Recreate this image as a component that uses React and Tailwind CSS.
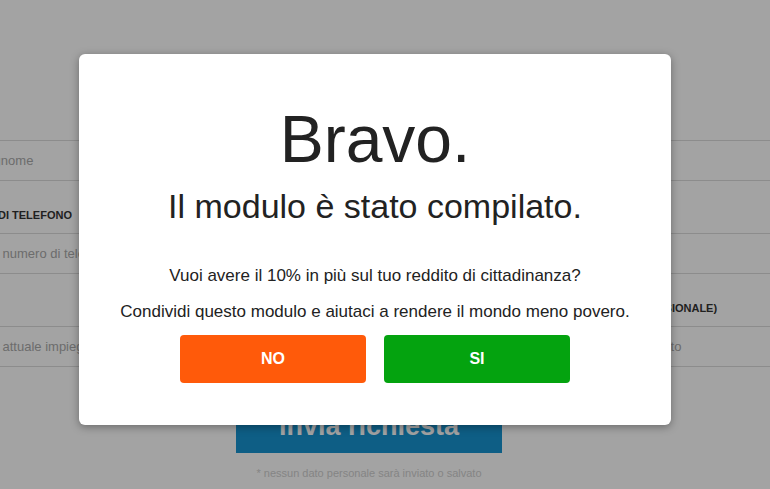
import React from 'react';

const Field = ({ label, placeholder }) => (
  <div>
    <div className="h-[52px] flex items-end pb-[10px] px-3 text-[11px] font-bold text-[#333] uppercase whitespace-nowrap">
      {label || '\u00a0'}
    </div>
    <div className="h-[41px] border border-[#dcdcdc] bg-white flex items-center px-3 text-[13px] text-[#aaaaaa] whitespace-nowrap overflow-hidden">
      {placeholder}
    </div>
  </div>
);

const App = () => {
  return (
    <div className="relative w-[770px] h-[489px] overflow-hidden bg-white font-['Liberation_Sans',Arial,sans-serif]">
      {/* Form behind the dialog */}
      <div className="pt-[88px]">
        <div className="-ml-9 grid grid-cols-[550px_256px] gap-x-5">
          <div>
            <Field label="" placeholder="Cognome" />
            <Field label="Nr. di telefono" placeholder="Tuo numero di telefono" />
            <Field label="" placeholder="Tuo attuale impiego" />
          </div>
          <div>
            <Field label="" placeholder="Nome" />
            <Field label="Email" placeholder="Indirizzo email" />
            <Field label="(Situazione professionale)" placeholder="Dipendente / Impiegato" />
          </div>
        </div>

        <button className="mt-[32px] ml-[236px] w-[266px] h-[54px] bg-[#1793d0] text-white text-[27px] font-bold">
          invia richiesta
        </button>
        <p className="mt-[12px] ml-[236px] w-[266px] text-center text-[11px] text-[#d0d0d0]">
          * nessun dato personale sarà inviato o salvato
        </p>
      </div>

      {/* Overlay + dialog */}
      <div className="absolute inset-0 bg-black/[0.36] pt-[54px] pl-[79px]">
        <div className="w-[592px] h-[371px] bg-white rounded-md shadow-[0_2px_8px_rgba(0,0,0,0.35)] flex flex-col items-center text-[#222]">
          <h1 className="mt-[52px] text-[66px] leading-none">Bravo.</h1>
          <h2 className="mt-[17px] text-[34px] leading-none">Il modulo è stato compilato.</h2>
          <p className="mt-[44px] text-[17px] leading-none">
            Vuoi avere il 10% in più sul tuo reddito di cittadinanza?
          </p>
          <p className="mt-[19px] text-[17px] leading-none">
            Condividi questo modulo e aiutaci a rendere il mondo meno povero.
          </p>
          <div className="mt-[15px] flex gap-[18px]">
            <button className="w-[186px] h-[48px] rounded-sm bg-[#ff5a0a] text-white text-[16px] font-bold">
              NO
            </button>
            <button className="w-[186px] h-[48px] rounded-sm bg-[#04a30f] text-white text-[16px] font-bold">
              SI
            </button>
          </div>
        </div>
      </div>
    </div>
  );
};

export default App;
